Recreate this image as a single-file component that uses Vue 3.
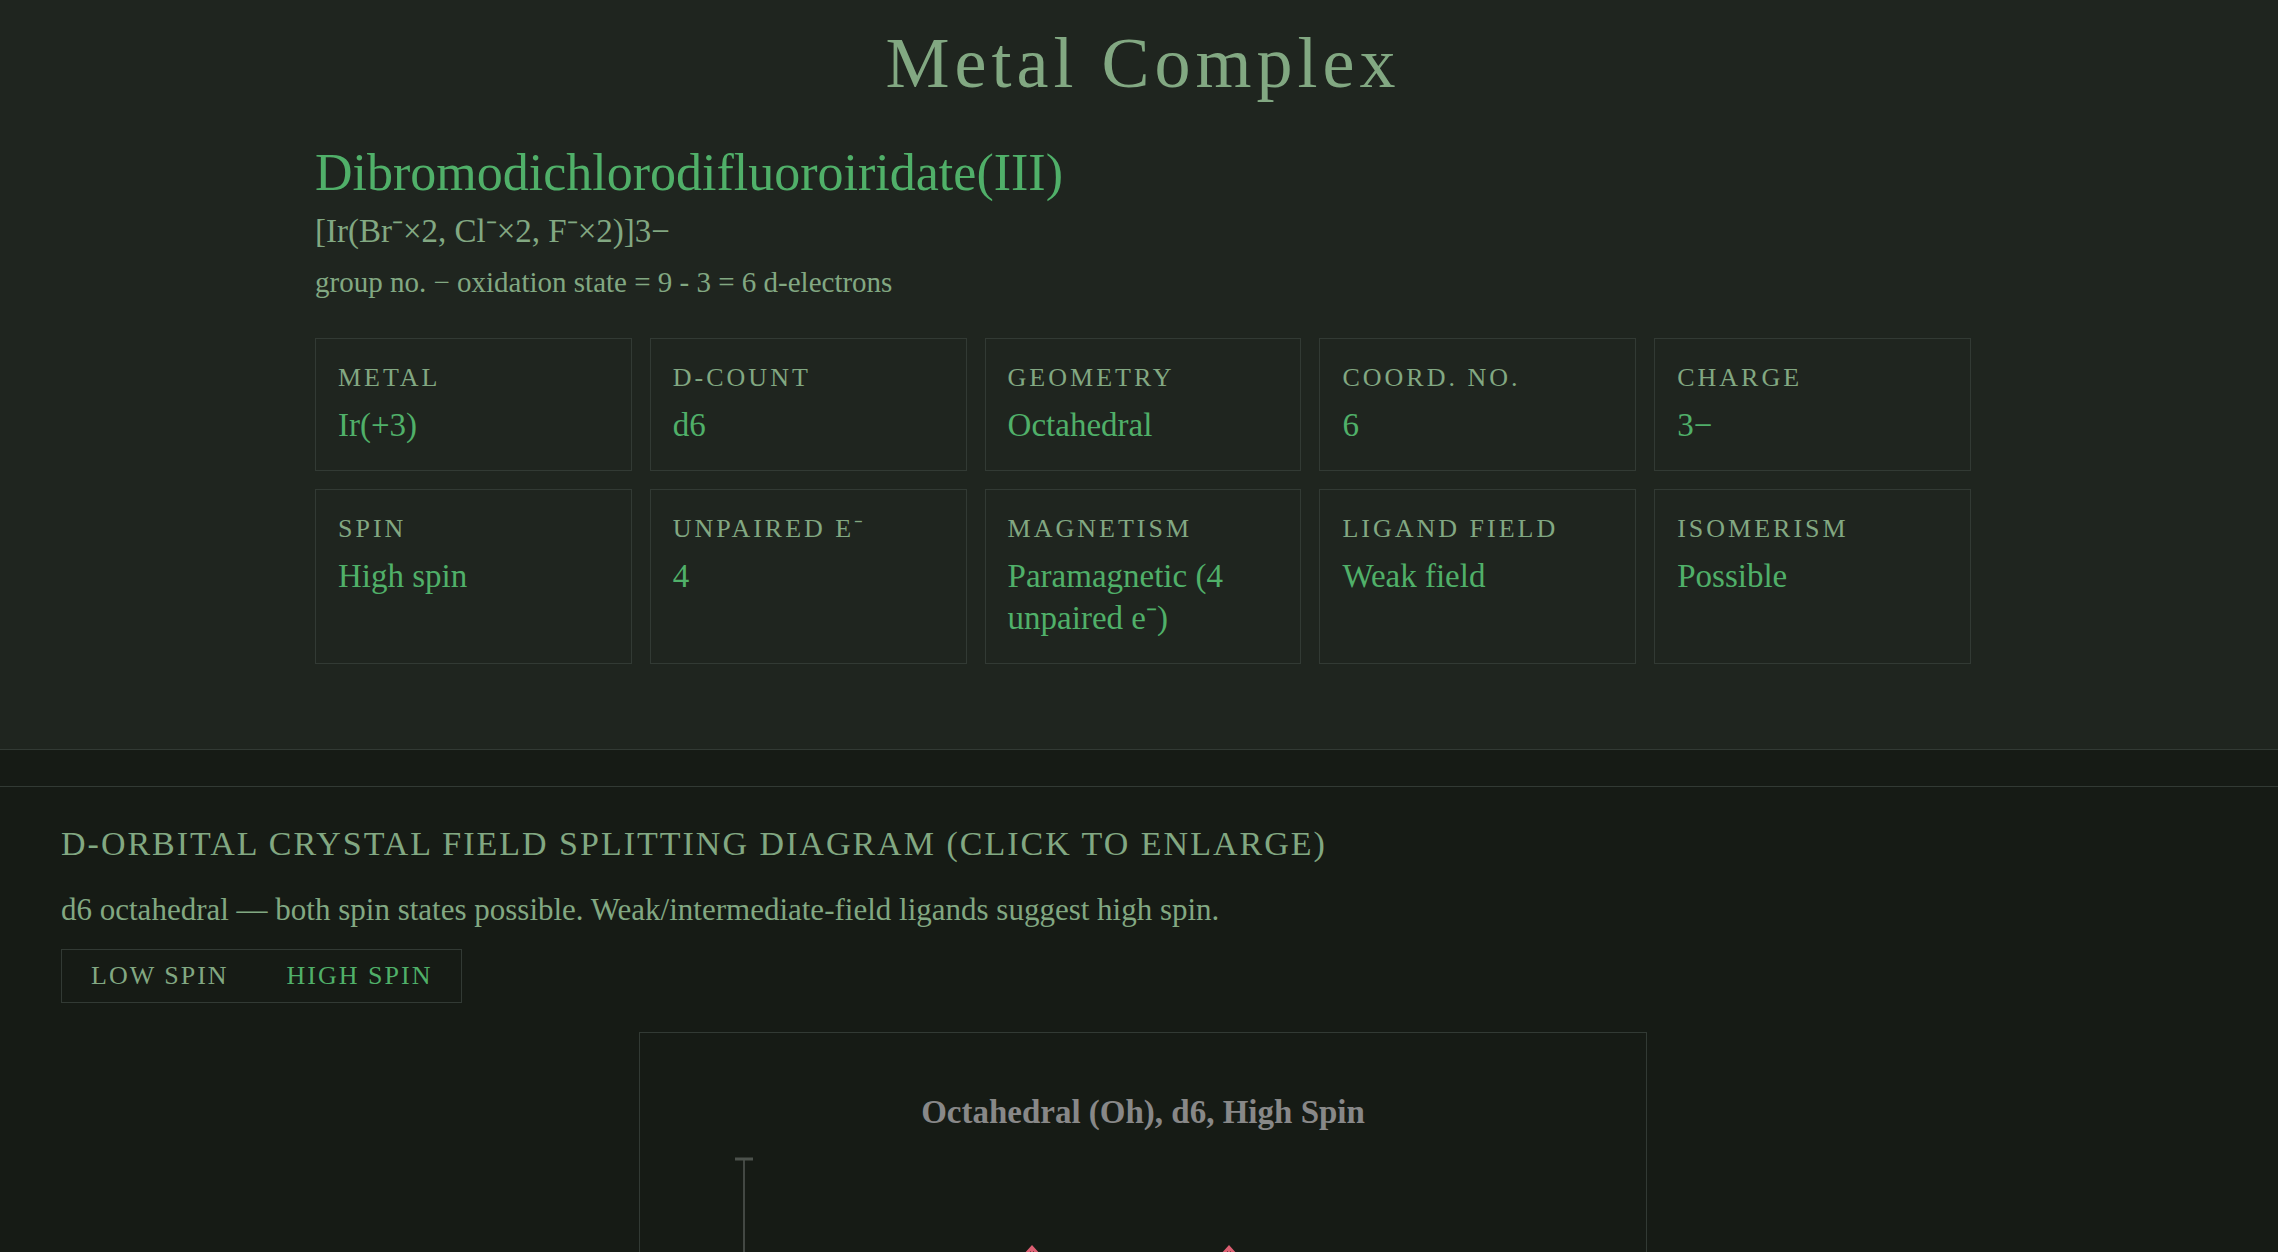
<template>
    <div class="page">
        <header class="summary">
            <h1 class="page-title">Metal Complex</h1>
            <div class="summary-inner">
                <h2 class="complex-name">Dibromodichlorodifluoroiridate(III)</h2>
                <p class="formula">[Ir(Br⁻×2, Cl⁻×2, F⁻×2)]3−</p>
                <p class="d-count">group no. − oxidation state = 9 - 3 = 6 d-electrons</p>
                <dl class="cards">
                    <div v-for="item in properties" :key="item.label" class="card">
                        <dt>{{ item.label }}</dt>
                        <dd>{{ item.value }}</dd>
                    </div>
                </dl>
            </div>
        </header>

        <section class="splitting">
            <h2 class="section-title">d-orbital crystal field splitting diagram (click to enlarge)</h2>
            <p class="section-note">d6 octahedral — both spin states possible. Weak/intermediate-field ligands suggest high spin.</p>
            <div class="spin-toggle">
                <button
                    v-for="state in spinStates"
                    :key="state"
                    type="button"
                    :class="{ active: state === spin }"
                    @click="spin = state"
                >{{ state }} spin</button>
            </div>
            <div class="diagram">
                <svg viewBox="0 0 1006 620" role="img" aria-label="Octahedral splitting diagram">
                    <text class="diagram-title" x="503" y="90">Octahedral (Oh), d6, {{ spin }} Spin</text>
                    <!-- energy axis -->
                    <path class="axis" d="M104 126V560" />
                    <path class="axis-cap" d="M95 126H113" />
                    <!-- eg electrons -->
                    <g v-for="x in egOrbitals" :key="x" class="electron">
                        <path :d="`M${x} 216V270`" />
                        <path class="head" :d="`M${x} 212L${x + 9} 222L${x + 5} 222L${x} 217L${x - 5} 222L${x - 9} 222Z`" />
                    </g>
                </svg>
            </div>
        </section>
    </div>
</template>

<script setup>
import { ref } from 'vue';

const spinStates = ['Low', 'High'];
const spin = ref('High');

const properties = [
    { label: 'Metal', value: 'Ir(+3)' },
    { label: 'd-count', value: 'd6' },
    { label: 'Geometry', value: 'Octahedral' },
    { label: 'Coord. no.', value: '6' },
    { label: 'Charge', value: '3−' },
    { label: 'Spin', value: 'High spin' },
    { label: 'Unpaired e⁻', value: '4' },
    { label: 'Magnetism', value: 'Paramagnetic (4 unpaired e⁻)' },
    { label: 'Ligand field', value: 'Weak field' },
    { label: 'Isomerism', value: 'Possible' }
];

const egOrbitals = [392, 589];
</script>

<style>
body {
    margin: 0;
    background: #161b15;
}
</style>

<style scoped>
.page {
    height: 100vh;
    overflow: hidden;
    background: #161b15;
    color: #82a882;
    font-family: "Liberation Serif", serif;
}

h1, h2, p, dl, dd {
    margin: 0;
    font-weight: 400;
}

.summary {
    padding: 18px 53px 85px 61px;
    background: #1f251f;
    border-bottom: 1px solid #323a34;
}

.page-title {
    font-size: 72px;
    line-height: 90px;
    letter-spacing: 5px;
    text-align: center;
}

.summary-inner {
    max-width: 1656px;
    margin: 35px auto 0;
}

.complex-name {
    font-size: 52px;
    line-height: 60px;
    color: #50b069;
}

.formula {
    margin-top: 4px;
    font-size: 33px;
    line-height: 48px;
}

.d-count {
    margin-top: 6px;
    font-size: 29px;
    line-height: 42px;
}

.cards {
    display: grid;
    grid-template-columns: repeat(5, 1fr);
    gap: 18px;
    margin-top: 35px;
}

.card {
    padding: 22px 22px 24px;
    border: 1px solid #323a34;
}

.card dt {
    font-size: 26px;
    line-height: 34px;
    letter-spacing: 3px;
    text-transform: uppercase;
}

.card dd {
    margin-top: 9px;
    font-size: 33px;
    line-height: 42px;
    color: #50b069;
}

.splitting {
    margin-top: 36px;
    padding: 34px 53px 34px 61px;
    border-top: 1px solid #323a34;
}

.section-title {
    font-size: 34px;
    line-height: 46px;
    letter-spacing: 2px;
    text-transform: uppercase;
}

.section-note {
    margin-top: 22px;
    font-size: 31px;
    line-height: 42px;
}

.spin-toggle {
    display: flex;
    width: fit-content;
    margin-top: 18px;
    border: 1px solid #323a34;
}

.spin-toggle button {
    padding: 0 29px;
    border: 0;
    background: none;
    color: inherit;
    font: inherit;
    font-size: 26px;
    line-height: 52px;
    letter-spacing: 2px;
    text-transform: uppercase;
    cursor: pointer;
}

.spin-toggle .active {
    color: #50b069;
}

.diagram {
    max-width: 1006px;
    margin: 29px auto 0;
    border: 1px solid #323a34;
    cursor: zoom-in;
}

.diagram svg {
    display: block;
    width: 100%;
}

.diagram-title {
    fill: #888;
    font-size: 33px;
    font-weight: 700;
    text-anchor: middle;
}

.axis {
    stroke: #434843;
    stroke-width: 2;
}

.axis-cap {
    stroke: #4c524c;
    stroke-width: 3;
}

.electron {
    fill: none;
    stroke: #dc5f72;
    stroke-width: 2;
}

.electron .head {
    fill: #dc5f72;
    stroke: none;
}
</style>
